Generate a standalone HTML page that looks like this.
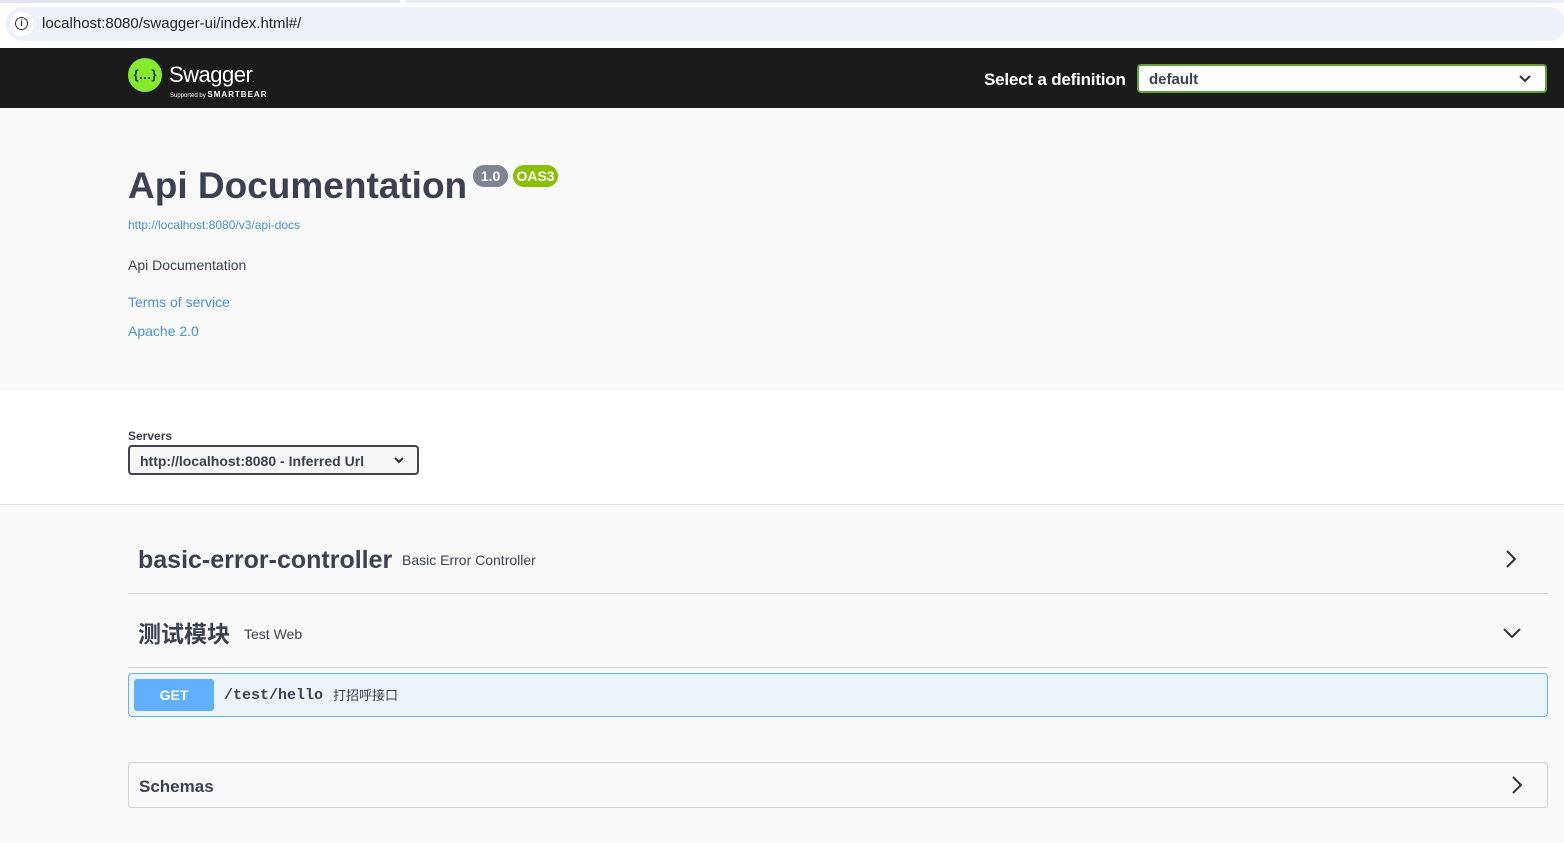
<!DOCTYPE html>
<html><head><meta charset="utf-8"><style>
*{box-sizing:border-box;margin:0;padding:0}
body{width:1564px;height:843px;overflow:hidden;background:#fafafa;font-family:"Liberation Sans","Noto Sans CJK SC",sans-serif;color:#3b4151;position:relative}
.abs{position:absolute}
</style></head><body>
<div class="abs" style="left:0;top:0;width:1564px;height:48px;background:#fff"></div>
<div class="abs" style="left:0;top:0;width:400px;height:3px;background:#dfe6f2"></div>
<div class="abs" style="left:405px;top:0;width:1159px;height:3px;background:#e8eef8"></div>
<div class="abs" style="left:6px;top:7px;width:1560px;height:34px;border-radius:17px;background:#edf2fa"></div>
<div class="abs" style="left:10px;top:12px;width:24px;height:24px;border-radius:12px;background:#fff"></div>
<div class="abs" style="left:15px;top:17px;width:13px;height:13px;border:1.5px solid #333;border-radius:50%;font-size:9px;line-height:10px;text-align:center;font-weight:bold;color:#333">i</div>
<div class="abs" style="left:42px;top:15px;font-size:15px;color:#222">localhost:8080/swagger-ui/index.html#/</div>

<div class="abs" style="left:0;top:48px;width:1564px;height:60px;background:#1b1b1b"></div>
<div class="abs" style="left:128px;top:58px;width:34px;height:34px;border-radius:50%;background:#85ea2d;color:#173647;font-size:13px;font-weight:bold;text-align:center;line-height:34px">{…}</div>
<div class="abs" style="left:169px;top:62px;color:#fff;font-size:22px;letter-spacing:-0.5px">Swagger<span style="font-size:6px">.</span></div>
<div class="abs" style="left:170px;top:90px;color:#fff;font-size:6px">Supported by <b style="font-size:8px;letter-spacing:1px">SMARTBEAR</b></div>
<div class="abs" style="left:984px;top:70px;color:#fff;font-size:17px;font-weight:bold;letter-spacing:-0.2px">Select a definition</div>
<div class="abs" style="left:1137px;top:64px;width:410px;height:29px;border:2px solid #62a03f;border-radius:4px;background:#fff;font-size:15px;font-weight:bold;padding:5px 10px;color:#3b4151">default
<svg class="abs" style="right:14px;top:9px" width="12" height="8" viewBox="0 0 12 8"><path d="M1 1l5 5 5-5" stroke="#333" stroke-width="2" fill="none"/></svg></div>

<div class="abs" style="left:128px;top:165px;font-size:37px;font-weight:bold;color:#3b4151">Api Documentation</div>
<div class="abs" style="left:473px;top:165px;width:35px;height:22px;border-radius:11px;background:#7d8492;color:#fff;font-size:14px;font-weight:bold;text-align:center;line-height:22px">1.0</div>
<div class="abs" style="left:513px;top:165px;width:45px;height:22px;border-radius:11px;background:#89bf04;color:#fff;font-size:14px;font-weight:bold;text-align:center;line-height:22px">OAS3</div>
<div class="abs" style="left:128px;top:218px;font-size:12px;color:#4990e2">http://localhost:8080/v3/api-docs</div>
<div class="abs" style="left:128px;top:257px;font-size:14px">Api Documentation</div>
<div class="abs" style="left:128px;top:294px;font-size:14px;color:#4990e2">Terms of service</div>
<div class="abs" style="left:128px;top:323px;font-size:14px;color:#4990e2">Apache 2.0</div>

<div class="abs" style="left:0;top:391px;width:1564px;height:114px;background:#fff;border-bottom:1px solid #e2e2e2"></div>
<div class="abs" style="left:128px;top:429px;font-size:12px;font-weight:bold">Servers</div>
<div class="abs" style="left:128px;top:445px;width:291px;height:30px;border:2px solid #41444e;border-radius:4px;background:#f7f7f7;font-size:14px;font-weight:bold;padding:6px 10px">http://localhost:8080 - Inferred Url
<svg class="abs" style="left:264px;top:10px" width="10" height="7" viewBox="0 0 10 7"><path d="M1 1l4 4 4-4" stroke="#333" stroke-width="2" fill="none"/></svg></div>

<div class="abs" style="left:138px;top:546px;font-size:25px;font-weight:bold">basic-error-controller</div>
<div class="abs" style="left:402px;top:552px;font-size:14px">Basic Error Controller</div>
<svg class="abs" style="left:1504px;top:549px" width="14" height="20" viewBox="0 0 14 20"><path d="M3 2l8 8-8 8" stroke="#333" stroke-width="2" fill="none"/></svg>
<div class="abs" style="left:128px;top:593px;width:1420px;height:1px;background:#d0d0d5"></div>
<div class="abs" style="left:138px;top:618px;font-size:23px;font-weight:bold;line-height:32px">测试模块</div>
<div class="abs" style="left:244px;top:626px;font-size:14px">Test Web</div>
<svg class="abs" style="left:1502px;top:626px" width="20" height="14" viewBox="0 0 20 14"><path d="M2 3l8 8 8-8" stroke="#333" stroke-width="2" fill="none"/></svg>
<div class="abs" style="left:128px;top:667px;width:1420px;height:1px;background:#d0d0d5"></div>

<div class="abs" style="left:128px;top:673px;width:1420px;height:44px;border:1px solid #61affe;border-radius:4px;background:#ebf3fb"></div>
<div class="abs" style="left:134px;top:679px;width:80px;height:32px;border-radius:3px;background:#61affe;color:#fff;font-size:14px;font-weight:bold;text-align:center;line-height:33px">GET</div>
<div class="abs" style="left:224px;top:687px;font-family:'Liberation Mono',monospace;font-size:15px;font-weight:bold;color:#3b4151">/test/hello</div>
<div class="abs" style="left:333px;top:687px;font-size:13px;line-height:18px">打招呼接口</div>

<div class="abs" style="left:128px;top:762px;width:1420px;height:46px;border:1px solid #d0d0d5;border-radius:4px"></div>
<div class="abs" style="left:139px;top:777px;font-size:17px;font-weight:bold">Schemas</div>
<svg class="abs" style="left:1510px;top:775px" width="14" height="20" viewBox="0 0 14 20"><path d="M3 2l8 8-8 8" stroke="#333" stroke-width="2" fill="none"/></svg>
</body></html>
